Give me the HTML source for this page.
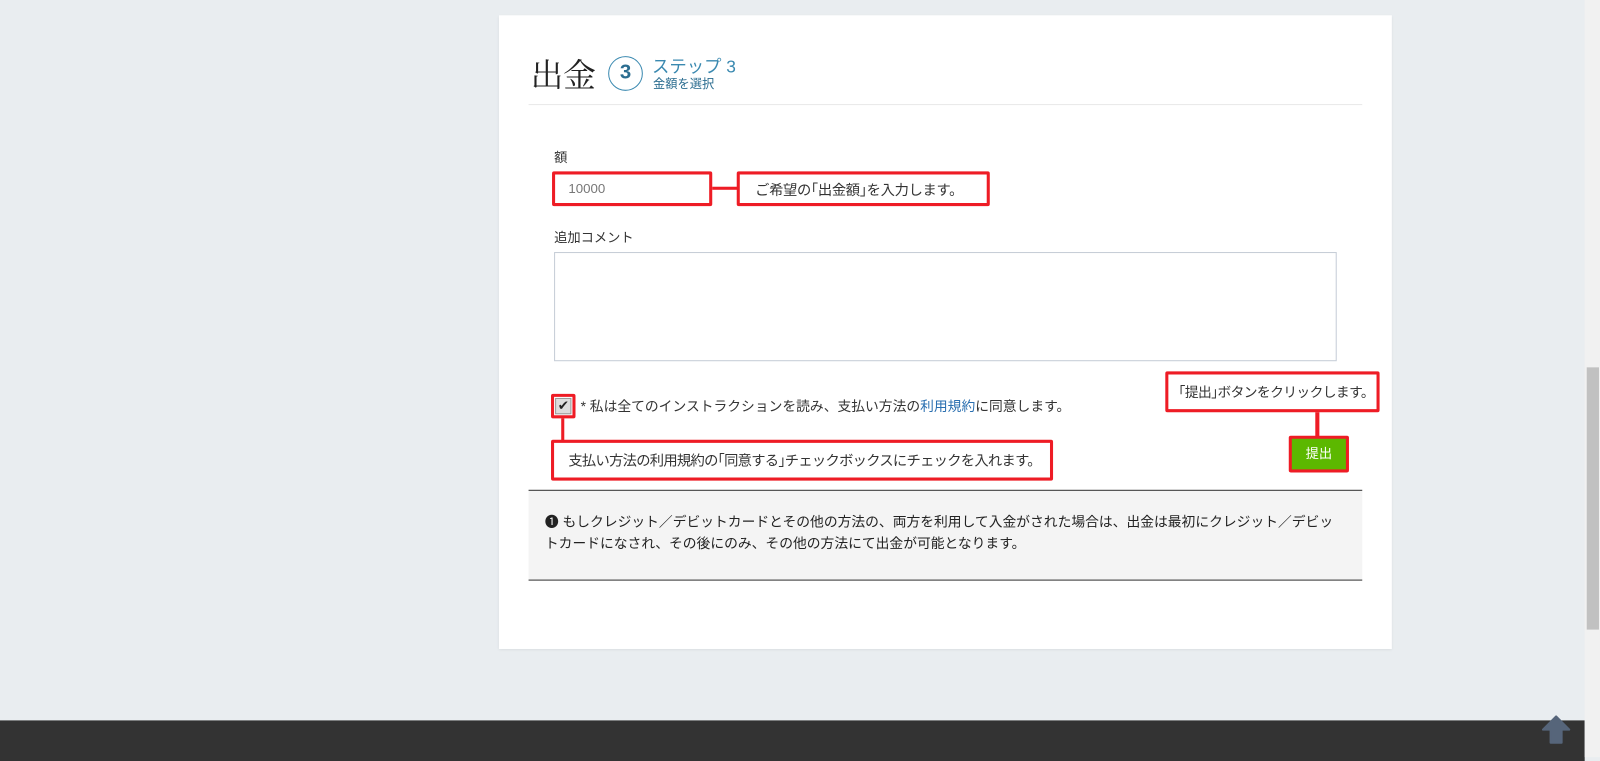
<!DOCTYPE html>
<html><head><meta charset="utf-8"><style>
*{margin:0;padding:0;box-sizing:border-box}
body{width:1600px;height:757px;background:#e9edf0;position:relative;overflow:hidden;font-family:"Liberation Sans","Noto Sans CJK JP",sans-serif;color:#333}
#w{position:absolute;left:0;top:0;width:1568px;height:742px;transform:scale(1.0204);transform-origin:0 0}
.a{position:absolute;white-space:nowrap}
.red{border:3px solid #ee1c25;background:#fff;border-radius:2px}
</style></head><body><div id="w">
<div class="a" style="left:489px;top:15px;width:875px;height:621px;background:#fff;box-shadow:0 1px 3px rgba(0,0,0,.08)"></div>
<div class="a" style="left:520px;top:50px;font-family:'Noto Serif CJK SC',serif;font-size:32px;color:#222;line-height:44px">出金</div>
<div class="a" style="left:596px;top:55px;width:34px;height:34px;border:1.5px solid #3a89b0;border-radius:50%;text-align:center;line-height:31px;font-weight:bold;font-size:20px;color:#2b6d90">3</div>
<div class="a" style="left:639px;top:51px;font-size:17px;color:#3a89b0">ステップ 3</div>
<div class="a" style="left:640px;top:73px;font-size:12px;color:#2b6d90">金額を選択</div>
<div class="a" style="left:518px;top:102px;width:817px;height:1px;background:#e8e8e8"></div>
<div class="a" style="left:543px;top:144px;font-size:13px">額</div>
<div class="a red" style="left:541px;top:168px;width:157px;height:34px;padding:6px 13px;font-size:13px;color:#777">10000</div>
<div class="a" style="left:698px;top:183px;width:27px;height:3px;background:#ee1c25"></div>
<div class="a red" style="left:722px;top:168px;width:248px;height:34px;padding:5px 0 0 15px;font-size:14px;letter-spacing:-0.3px">ご希望の｢出金額｣を入力します。</div>
<div class="a" style="left:543px;top:222px;font-size:13px">追加コメント</div>
<div class="a" style="left:543px;top:247px;width:767px;height:107px;border:1px solid #c5ccd6"></div>
<div class="a red" style="left:540px;top:386px;width:24px;height:24px;padding:1px"><div style="width:16px;height:16px;background:#ddd;border:1px solid #999;font-size:13px;line-height:14px;text-align:center;color:#222">✔</div></div>
<div class="a" style="left:569px;top:387px;font-size:13.5px">* 私は全てのインストラクションを読み、支払い方法の<span style="color:#2a6fb0">利用規約</span>に同意します。</div>
<div class="a" style="left:550px;top:410px;width:3px;height:22px;background:#ee1c25"></div>
<div class="a red" style="left:540px;top:431px;width:492px;height:40px;padding:7px 0 0 14px;font-size:14px;letter-spacing:-0.7px">支払い方法の利用規約の｢同意する｣チェックボックスにチェックを入れます。</div>
<div class="a red" style="left:1142px;top:364px;width:210px;height:40px;padding:6px 0 0 10px;font-size:13.5px;letter-spacing:-0.6px">｢提出｣ボタンをクリックします。</div>
<div class="a" style="left:1289px;top:404px;width:4px;height:24px;background:#ee1c25"></div>
<div class="a" style="left:1263px;top:427px;width:59px;height:36px;background:#ee1c25;border-radius:2px;padding:3px"><div style="background:#5cb800;color:#fff;height:30px;text-align:center;line-height:30px;font-size:13px">提出</div></div>
<div class="a" style="left:518px;top:480px;width:817px;height:89px;background:#f4f4f4;border-top:1px solid #333;border-bottom:1px solid #333;padding:20px 16px;font-size:13.5px;line-height:21px;color:#222;white-space:normal">❶ もしクレジット／デビットカードとその他の方法の、両方を利用して入金がされた場合は、出金は最初にクレジット／デビットカードになされ、その後にのみ、その他の方法にて出金が可能となります。</div>
<div class="a" style="left:0;top:706px;width:1553px;height:40px;background:#333"></div>
<svg class="a" style="left:1509px;top:699px" width="32" height="32" viewBox="0 0 30 30"><path d="M15 3 L27 15 L20 15 L20 27 L10 27 L10 15 L3 15Z" fill="#56657a" stroke="#56657a" stroke-linejoin="round" stroke-width="2"/></svg>
<div class="a" style="left:1553px;top:0;width:15px;height:742px;background:#f1f1f1"></div>
<div class="a" style="left:1555px;top:360px;width:12px;height:257px;background:#c1c1c1"></div>
</div></body></html>
